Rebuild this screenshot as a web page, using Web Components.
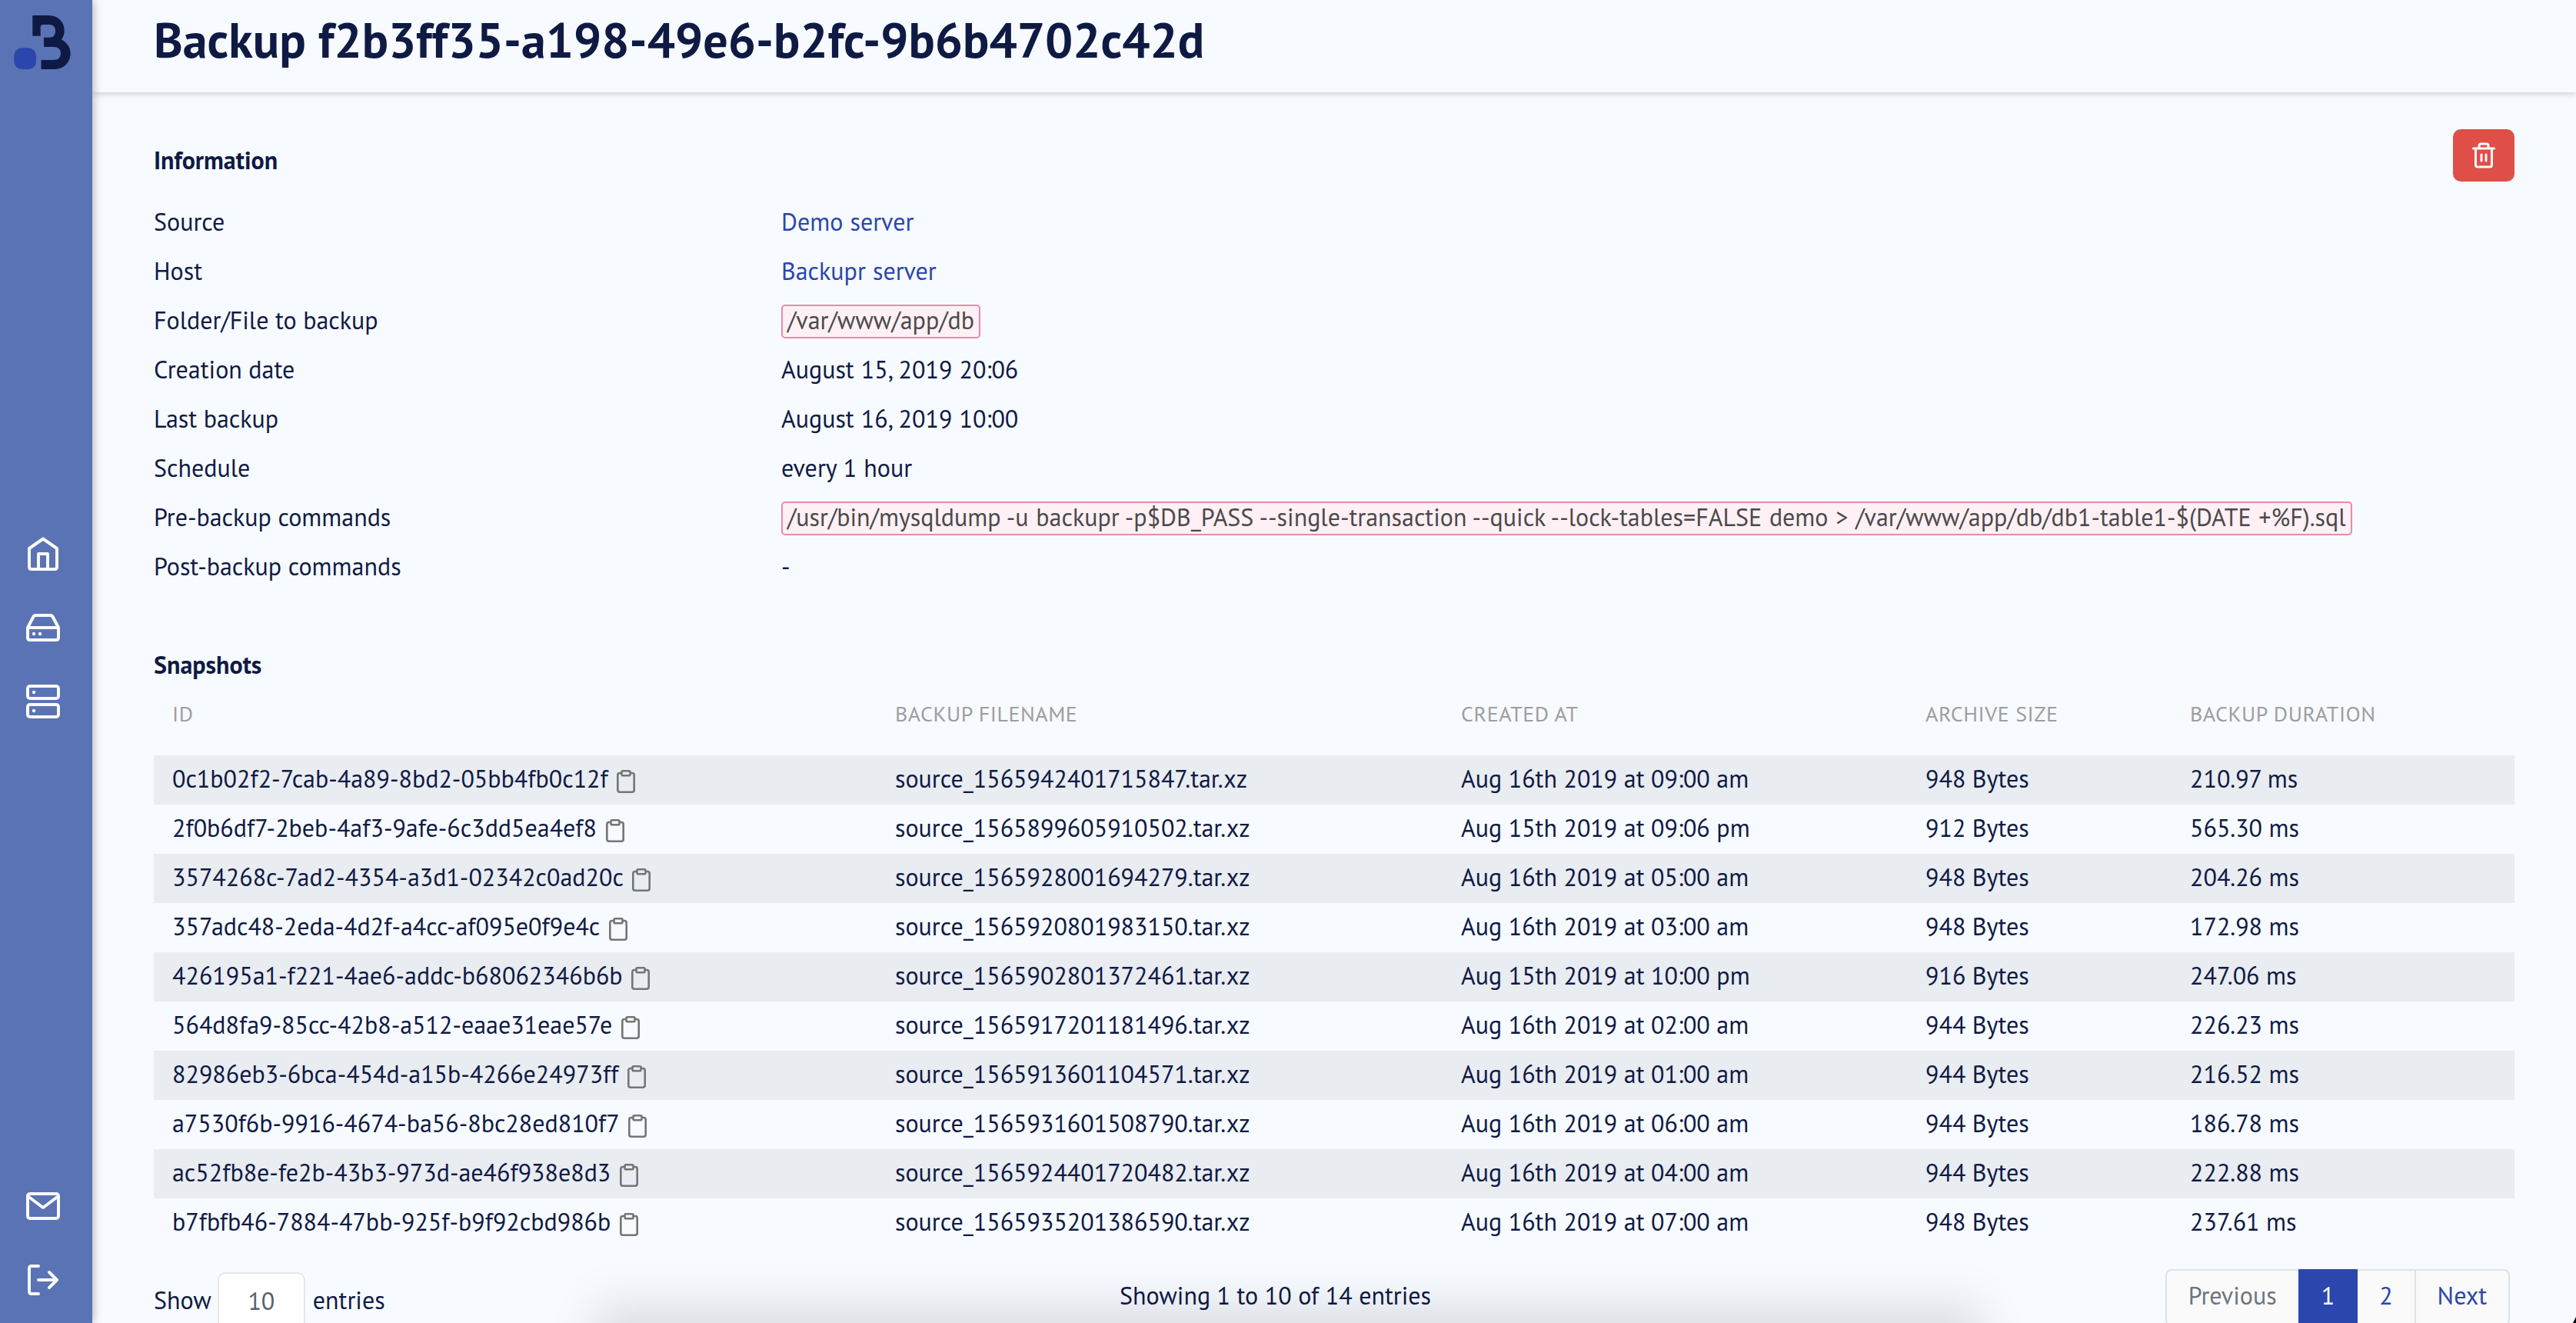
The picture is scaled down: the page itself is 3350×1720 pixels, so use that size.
<!DOCTYPE html>
<html lang="en">
<head>
<meta charset="utf-8">
<title>Backupr</title>
<style>
    html, body {
        margin: 0;
        height: 1720px;
        overflow: hidden;
    }

    body {
        --color-primary: #2b46ad;
        --color-text: #0f1a44;
        --color-bg: #f7faff;
        --color-border: #dee2e6;
        background: var(--color-bg);
        color: var(--color-text);
        font: 32px/48px "PT Sans", "Noto Sans", sans-serif;
    }
</style>
</head>
<body>
<backup-app>
    <side-bar slot="sidebar"></side-bar>
    <page-header slot="header">Backup f2b3ff35-a198-49e6-b2fc-9b6b4702c42d</page-header>
    <info-section heading="Information">
        <info-row label="Source"><text-link>Demo server</text-link></info-row>
        <info-row label="Host"><text-link>Backupr server</text-link></info-row>
        <info-row label="Folder/File to backup"><code-tag>/var/www/app/db</code-tag></info-row>
        <info-row label="Creation date">August 15, 2019 20:06</info-row>
        <info-row label="Last backup">August 16, 2019 10:00</info-row>
        <info-row label="Schedule">every 1 hour</info-row>
        <info-row label="Pre-backup commands"><code-tag>/usr/bin/mysqldump -u backupr -p$DB_PASS --single-transaction --quick --lock-tables=FALSE demo &gt; /var/www/app/db/db1-table1-$(DATE +%F).sql</code-tag></info-row>
        <info-row label="Post-backup commands">-</info-row>
    </info-section>
    <snapshot-table heading="Snapshots"></snapshot-table>
    <table-footer></table-footer>
</backup-app>

<script>
class BackupApp extends HTMLElement {
    constructor() {
        super();
        this.attachShadow({ mode: 'open' });
        this.shadowRoot.innerHTML = `
            <style>
                :host {
                    display: flex;
                    position: relative;
                    width: 3350px;
                    height: 1720px;
                    overflow: hidden;
                }

                .page {
                    flex: 1;
                    min-width: 0;
                }

                main {
                    display: flex;
                    flex-direction: column;
                    padding: 64px 80px 0;
                }

                /* soft shade rising from the bottom of the window */
                .shade {
                    position: absolute;
                    left: 774px;
                    top: 1696px;
                    width: 1802px;
                    height: 200px;
                    background: rgba(0, 0, 0, 0.11);
                    filter: blur(28px);
                    pointer-events: none;
                }

                .corner {
                    position: absolute;
                    right: 0;
                    bottom: 0;
                    width: 4px;
                    height: 8px;
                    background: #000;
                    clip-path: polygon(100% 0, 100% 100%, 0 100%);
                }
            </style>
            <slot name="sidebar"></slot>
            <div class="page">
                <slot name="header"></slot>
                <main><slot></slot></main>
            </div>
            <div class="shade"></div>
            <div class="corner"></div>
        `;
    }
}

class SideBar extends HTMLElement {
    constructor() {
        super();
        this.attachShadow({ mode: 'open' });
        this.shadowRoot.innerHTML = `
            <style>
                :host {
                    display: flex;
                    flex-direction: column;
                    justify-content: space-between;
                    position: relative;
                    z-index: 2;
                    box-sizing: border-box;
                    width: 120px;
                    height: 1720px;
                    padding: 20px 0 32px 18px;
                    background: #5a73b5;
                    box-shadow: 0 0 12px rgba(0, 0, 0, 0.36);
                }

                svg {
                    display: block;
                }

                nav {
                    display: flex;
                    flex-direction: column;
                    gap: 48px;
                    padding-left: 14px;
                    fill: none;
                    stroke: #fafafa;
                    stroke-width: 4;
                    stroke-linecap: round;
                    stroke-linejoin: round;
                }

                .main {
                    margin-top: -2px;
                }

                .dot {
                    fill: #fafafa;
                    stroke: none;
                }
            </style>
            <svg width="74" height="70" viewBox="18 20 74 70">
                <path fill="#0f1a44" d="M42.3 20H63.5C75.5 20 83.7 28.5 83.7 39.5C83.7 44 82.5 48 80 51.3C87 55.5 91.7 61.5 91.7 69.5C91.7 81 83 90 71 90H53.5V78H69.5Q79 78 79 69.5Q79 61 70 61H57V48.7H64Q72 48.7 72 40.5Q72 32 64 32H56Q52.7 32 52.7 35.5V46.7H42.3Z"/>
                <rect x="18.3" y="62.3" width="28.7" height="27.7" rx="10" fill="#2b46ad"/>
            </svg>
            <nav class="main">
                <svg width="48" height="48" viewBox="32 696 48 48">
                    <path d="M56 700.5L38 713V737Q38 740 41 740H71Q74 740 74 737V713Z"/>
                    <path d="M50 740V720H62V740"/>
                </svg>
                <svg width="48" height="48" viewBox="32 792 48 48">
                    <path d="M36 816L43.3 802Q44.3 800 46.5 800H65.5Q67.7 800 68.7 802L76 816V829Q76 832 73 832H39Q36 832 36 829ZH76"/>
                    <circle class="dot" cx="44" cy="824" r="2.2"/>
                    <circle class="dot" cx="52" cy="824" r="2.2"/>
                </svg>
                <svg width="48" height="48" viewBox="32 888 48 48">
                    <rect x="36" y="892" width="40" height="16" rx="3"/>
                    <rect x="36" y="916" width="40" height="16" rx="3"/>
                    <circle class="dot" cx="44" cy="900" r="2.2"/>
                    <circle class="dot" cx="44" cy="924" r="2.2"/>
                </svg>
            </nav>
            <nav>
                <svg width="48" height="48" viewBox="32 1544 48 48">
                    <rect x="36" y="1552" width="40" height="32" rx="3"/>
                    <path d="M36 1555L56 1570L76 1555"/>
                </svg>
                <svg width="48" height="48" viewBox="32 1640 48 48">
                    <path d="M50 1646H41Q38 1646 38 1649V1679Q38 1682 41 1682H50M50 1664H74M64 1654L74 1664L64 1674"/>
                </svg>
            </nav>
        `;
    }
}

class PageHeader extends HTMLElement {
    constructor() {
        super();
        this.attachShadow({ mode: 'open' });
        this.shadowRoot.innerHTML = `
            <style>
                :host {
                    display: block;
                    box-sizing: border-box;
                    height: 120px;
                    padding: 12px 80px 0;
                    box-shadow: 0 2px 8px rgba(0, 0, 0, 0.18);
                }

                h1 {
                    margin: 0;
                    font-size: 64px;
                    line-height: 80px;
                }
            </style>
            <h1><slot></slot></h1>
        `;
    }
}

class InfoSection extends HTMLElement {
    constructor() {
        super();
        this.attachShadow({ mode: 'open' });
        this.shadowRoot.innerHTML = `
            <style>
                :host {
                    display: block;
                    margin-bottom: 72px;
                }

                .top {
                    display: flex;
                    justify-content: space-between;
                    height: 72px;
                }

                h2 {
                    margin: 0;
                    font-size: 32px;
                    line-height: 48px;
                }

                button {
                    display: flex;
                    align-items: center;
                    justify-content: center;
                    width: 80px;
                    height: 68px;
                    margin: -16px 0 0;
                    padding: 0;
                    border: 0;
                    border-radius: 10px;
                    background: #df4f47;
                }
            </style>
            <div class="top">
                <h2></h2>
                <button>
                    <svg width="32" height="36" viewBox="0 0 32 36" fill="none" stroke="#fafafa" stroke-width="3" stroke-linecap="round">
                        <path d="M2.5 9H29.5M10 9V5.5Q10 3 12.5 3H19.5Q22 3 22 5.5V9"/>
                        <path d="M5.5 9V30.5Q5.5 33 8 33H24Q26.5 33 26.5 30.5V9M13 17V25M19 17V25"/>
                    </svg>
                </button>
            </div>
            <slot></slot>
        `;
    }

    connectedCallback() {
        this.shadowRoot.querySelector('h2').textContent = this.getAttribute('heading');
    }
}

class InfoRow extends HTMLElement {
    constructor() {
        super();
        this.attachShadow({ mode: 'open' });
        this.shadowRoot.innerHTML = `
            <style>
                :host {
                    display: grid;
                    grid-template-columns: 816px 1fr;
                    height: 64px;
                    line-height: 64px;
                    white-space: nowrap;
                }

                .value {
                    word-spacing: 0.6px;
                }
            </style>
            <span class="label"></span>
            <div class="value"><slot></slot></div>
        `;
    }

    connectedCallback() {
        this.shadowRoot.querySelector('.label').textContent = this.getAttribute('label');
    }
}

class TextLink extends HTMLElement {
    constructor() {
        super();
        this.attachShadow({ mode: 'open' });
        this.shadowRoot.innerHTML = `
            <style>
                a {
                    color: var(--color-primary);
                    text-decoration: none;
                }
            </style>
            <a href="#"><slot></slot></a>
        `;
    }
}

class CodeTag extends HTMLElement {
    constructor() {
        super();
        this.attachShadow({ mode: 'open' });
        this.shadowRoot.innerHTML = `
            <style>
                :host {
                    display: inline-block;
                    box-sizing: border-box;
                    height: 44px;
                    padding: 0 6px;
                    border: 2px solid #ea8aab;
                    border-radius: 5px;
                    background: #fff0f5;
                    color: #4a4a4a;
                    line-height: 36px;
                    word-spacing: 1.2px;
                }
            </style>
            <slot></slot>
        `;
    }
}

class SnapshotTable extends HTMLElement {
    constructor() {
        super();
        this._columns = ['ID', 'Backup filename', 'Created at', 'Archive size', 'Backup duration'];
        this._rows = [
            ['0c1b02f2-7cab-4a89-8bd2-05bb4fb0c12f', 'source_1565942401715847.tar.xz', 'Aug 16th 2019 at 09:00 am', '948 Bytes', '210.97 ms'],
            ['2f0b6df7-2beb-4af3-9afe-6c3dd5ea4ef8', 'source_1565899605910502.tar.xz', 'Aug 15th 2019 at 09:06 pm', '912 Bytes', '565.30 ms'],
            ['3574268c-7ad2-4354-a3d1-02342c0ad20c', 'source_1565928001694279.tar.xz', 'Aug 16th 2019 at 05:00 am', '948 Bytes', '204.26 ms'],
            ['357adc48-2eda-4d2f-a4cc-af095e0f9e4c', 'source_1565920801983150.tar.xz', 'Aug 16th 2019 at 03:00 am', '948 Bytes', '172.98 ms'],
            ['426195a1-f221-4ae6-addc-b68062346b6b', 'source_1565902801372461.tar.xz', 'Aug 15th 2019 at 10:00 pm', '916 Bytes', '247.06 ms'],
            ['564d8fa9-85cc-42b8-a512-eaae31eae57e', 'source_1565917201181496.tar.xz', 'Aug 16th 2019 at 02:00 am', '944 Bytes', '226.23 ms'],
            ['82986eb3-6bca-454d-a15b-4266e24973ff', 'source_1565913601104571.tar.xz', 'Aug 16th 2019 at 01:00 am', '944 Bytes', '216.52 ms'],
            ['a7530f6b-9916-4674-ba56-8bc28ed810f7', 'source_1565931601508790.tar.xz', 'Aug 16th 2019 at 06:00 am', '944 Bytes', '186.78 ms'],
            ['ac52fb8e-fe2b-43b3-973d-ae46f938e8d3', 'source_1565924401720482.tar.xz', 'Aug 16th 2019 at 04:00 am', '944 Bytes', '222.88 ms'],
            ['b7fbfb46-7884-47bb-925f-b9f92cbd986b', 'source_1565935201386590.tar.xz', 'Aug 16th 2019 at 07:00 am', '948 Bytes', '237.61 ms']
        ];
        this.attachShadow({ mode: 'open' });
        this.shadowRoot.innerHTML = `
            <style>
                :host {
                    display: block;
                }

                h2 {
                    margin: 0;
                    font-size: 32px;
                    line-height: 48px;
                }

                .row {
                    display: grid;
                    grid-template-columns: 940px 736px 604px 344px 1fr;
                    box-sizing: border-box;
                    height: 64px;
                    padding-top: 6px;
                    white-space: nowrap;
                }

                .row:nth-child(even) {
                    background: #e9ecf1;
                }

                .row > span {
                    display: flex;
                    padding-left: 24px;
                }

                .head {
                    height: 94px;
                    padding-top: 16px;
                    color: #9e9e9e;
                    font-size: 28px;
                    letter-spacing: 0.5px;
                    text-transform: uppercase;
                }

                svg {
                    margin: 13px 0 0 11.5px;
                }
            </style>
            <h2></h2>
            <div class="table"></div>
        `;
    }

    connectedCallback() {
        this.shadowRoot.querySelector('h2').textContent = this.getAttribute('heading');
        this._render();
    }

    _render() {
        const icon = `
            <svg width="24" height="30" viewBox="0 0 24 30" fill="none" stroke="#757575" stroke-width="2.6">
                <path d="M6.5 4H4Q1.3 4 1.3 6.7V26Q1.3 28.7 4 28.7H20Q22.7 28.7 22.7 26V6.7Q22.7 4 20 4H17.5"/>
                <rect x="6.5" y="1.3" width="11" height="6" rx="1.5"/>
            </svg>`;
        const head = this._columns.map(name => `<span>${name}</span>`).join('');
        const body = this._rows.map(row => {
            const cells = row.map((cell, i) => `<span>${cell}${i === 0 ? icon : ''}</span>`);
            return `<div class="row">${cells.join('')}</div>`;
        });
        this.shadowRoot.querySelector('.table').innerHTML = `<div class="row head">${head}</div>${body.join('')}`;
    }
}

class TableFooter extends HTMLElement {
    constructor() {
        super();
        this.attachShadow({ mode: 'open' });
        this.shadowRoot.innerHTML = `
            <style>
                :host {
                    display: grid;
                    grid-template-columns: 1256px 1fr auto;
                    padding-top: 28px;
                    white-space: nowrap;
                }

                .length {
                    display: flex;
                    align-items: center;
                    height: 76px;
                    margin-top: 4px;
                }

                .select {
                    box-sizing: border-box;
                    width: 114px;
                    height: 76px;
                    margin: 0 10px 0 8px;
                    border: 2px solid #e4e7eb;
                    border-radius: 10px;
                    background: #fff;
                    color: #55626c;
                    line-height: 70px;
                    text-align: center;
                }

                .info {
                    padding-top: 10px;
                }

                .length > span {
                    padding-bottom: 4px;
                }
            </style>
            <div class="length"><span>Show</span><div class="select">10</div><span>entries</span></div>
            <div class="info">Showing 1 to 10 of 14 entries</div>
            <page-links></page-links>
        `;
    }
}

class PageLinks extends HTMLElement {
    constructor() {
        super();
        this.attachShadow({ mode: 'open' });
        this.shadowRoot.innerHTML = `
            <style>
                :host {
                    display: flex;
                    justify-content: flex-end;
                    padding-right: 6px;
                }

                a {
                    box-sizing: border-box;
                    height: 74px;
                    padding: 8px 28px 0;
                    border: 2px solid var(--color-border);
                    border-left-width: 0;
                    background: #fafafa;
                    color: var(--color-primary);
                }

                a:first-of-type {
                    border-left-width: 2px;
                    border-right: 0;
                    border-radius: 8px 0 0 8px;
                    color: #6c757d;
                }

                a:last-of-type {
                    border-radius: 0 8px 8px 0;
                }

                .active {
                    border-color: var(--color-primary);
                    background: var(--color-primary);
                    color: #fff;
                    border-left-width: 2px;
                }
            </style>
            <a>Previous</a><a class="active">1</a><a>2</a><a>Next</a>
        `;
    }
}

customElements.define('backup-app', BackupApp);
customElements.define('side-bar', SideBar);
customElements.define('page-header', PageHeader);
customElements.define('info-section', InfoSection);
customElements.define('info-row', InfoRow);
customElements.define('text-link', TextLink);
customElements.define('code-tag', CodeTag);
customElements.define('snapshot-table', SnapshotTable);
customElements.define('table-footer', TableFooter);
customElements.define('page-links', PageLinks);
</script>
</body>
</html>
